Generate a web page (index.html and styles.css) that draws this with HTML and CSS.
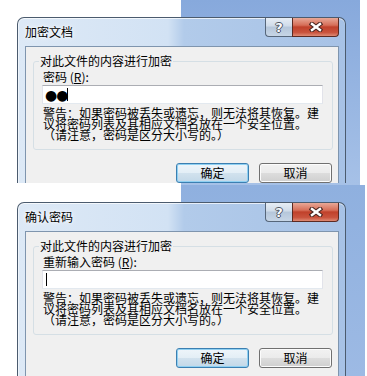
FILE: index.html
```html
<!DOCTYPE html>
<html>
<head>
    <meta charset="utf-8">
    <link rel="stylesheet" href="styles.css">
</head>
<body>
    <div class="shot shot-first">
        <div class="window">
            <div class="titlebar">
                <span class="title">加密文档</span>
                <div class="caption">
                    <span class="cap-btn help">?</span>
                    <span class="cap-btn close">
                        <svg width="14" height="10" viewBox="0 0 14 10">
                            <path d="M3 2 L11 8 M11 2 L3 8" stroke="#4a2620" stroke-width="4.6" stroke-linecap="square"/>
                            <path d="M3 2 L11 8 M11 2 L3 8" stroke="#fff" stroke-width="2.4" stroke-linecap="square"/>
                        </svg>
                    </span>
                </div>
            </div>
            <div class="client">
                <fieldset class="group">
                    <legend>对此文件的内容进行加密</legend>
                    <div class="field-label">密码 (<u>R</u>):</div>
                    <div class="edit"><span class="dots">●●</span><span class="caret"></span></div>
                    <p class="warning">警告：如果密码被丢失或遗忘，则无法将其恢复。建<br>议将密码列表及其相应文档名放在一个安全位置。<br>（请注意，密码是区分大小写的。）</p>
                </fieldset>
                <div class="buttons">
                    <button class="btn default">确定</button>
                    <button class="btn">取消</button>
                </div>
            </div>
        </div>
    </div>
    <div class="shot shot-second">
        <div class="window">
            <div class="titlebar">
                <span class="title">确认密码</span>
                <div class="caption">
                    <span class="cap-btn help">?</span>
                    <span class="cap-btn close">
                        <svg width="14" height="10" viewBox="0 0 14 10">
                            <path d="M3 2 L11 8 M11 2 L3 8" stroke="#4a2620" stroke-width="4.6" stroke-linecap="square"/>
                            <path d="M3 2 L11 8 M11 2 L3 8" stroke="#fff" stroke-width="2.4" stroke-linecap="square"/>
                        </svg>
                    </span>
                </div>
            </div>
            <div class="client">
                <fieldset class="group">
                    <legend>对此文件的内容进行加密</legend>
                    <div class="field-label">重新输入密码 (<u>R</u>):</div>
                    <div class="edit"><span class="caret"></span></div>
                    <p class="warning">警告：如果密码被丢失或遗忘，则无法将其恢复。建<br>议将密码列表及其相应文档名放在一个安全位置。<br>（请注意，密码是区分大小写的。）</p>
                </fieldset>
                <div class="buttons">
                    <button class="btn default">确定</button>
                    <button class="btn">取消</button>
                </div>
            </div>
        </div>
    </div>
</body>
</html>
```

FILE: styles.css
```css
body {
    margin: 0;
    width: 367px;
    height: 376px;
    overflow: hidden;
    font-family: "Noto Sans CJK SC", sans-serif;
    font-size: 12px;
    color: #000;
}
.shot {
    box-sizing: border-box;
    padding: 17px 0 0 17px;
    overflow: hidden;
    background:
        linear-gradient(to right, #fff 181px, transparent 181px, transparent 360px, #fff 360px),
        linear-gradient(#87a9dc, #a6c1e7);
}
.shot-first {
    height: 185px;
}
.shot-second {
    height: 191px;
    background:
        linear-gradient(to right, #fff 181px, transparent 181px, transparent 365px, #fff 365px),
        linear-gradient(#8fb0df, #9dbae4);
}
.window {
    box-sizing: border-box;
    width: 329px;
    border: solid 1px #4b5b6e;
    border-bottom: none;
    border-radius: 7px 7px 0 0;
    padding: 0 6px 0 7px;
    background: linear-gradient(to right, #dde9f6 0, #d2e2f4 150px, #b2cbea 166px, #a7c2e6 100%);
    box-shadow: inset 0 1px 0 rgba(255, 255, 255, 0.7), inset 1px 0 0 rgba(255, 255, 255, 0.5);
}
.shot-first .window {
    height: 166px;
    overflow: hidden;
}
.shot-second .window {
    height: 180px;
}
.titlebar {
    display: flex;
    height: 28px;
}
.title {
    align-self: center;
    line-height: 14px;
    text-shadow: 0 0 6px #fff, 0 0 3px #fff;
}
.caption {
    margin-left: auto;
    display: flex;
    height: 19px;
}
.cap-btn {
    box-sizing: border-box;
    display: flex;
    align-items: center;
    justify-content: center;
    height: 19px;
    border: solid 1px #56667a;
    border-top: none;
}
.help {
    width: 27px;
    border-right: none;
    border-radius: 0 0 0 4px;
    background: linear-gradient(#e6edf5, #cfdbe9 45%, #b5c6da 50%, #c6d5e6);
    font-family: "DejaVu Sans", sans-serif;
    font-weight: bold;
    font-size: 13px;
    color: #fafbfd;
    text-shadow: 1px 0 0 #4c5563, -1px 0 0 #4c5563, 0 1px 0 #4c5563, 0 -1px 0 #4c5563;
}
.close {
    width: 47px;
    border-color: #5c2a22;
    border-radius: 0 0 4px 0;
    background: linear-gradient(#e8a897, #d66e58 40%, #c0412b 50%, #c9533d 80%, #de8a74);
}
.client {
    border: solid 1px #7f95ae;
    background: #f0f0f0;
    height: 100%;
}
.group {
    margin: 8px 5px 0 7px;
    padding: 0 9px 9px 9px;
    border: solid 1px #d5dfe5;
    border-radius: 3px;
    min-width: 0;
}
.group legend {
    margin-left: -4px;
    padding: 0 1px;
    line-height: 12px;
}
.field-label {
    margin-top: 3px;
    line-height: 14px;
}
.edit {
    display: flex;
    align-items: center;
    height: 19px;
    box-sizing: border-box;
    margin: 1px 0 0 -1px;
    padding-left: 3px;
    background: #fff;
    border: solid 1px #e2e3ea;
    border-top-color: #abadb3;
    border-bottom-color: #e3e9ef;
}
.dots {
    margin-left: -1px;
    font-family: "DejaVu Sans", sans-serif;
    font-size: 14px;
    line-height: 14px;
    letter-spacing: -1px;
}
.caret {
    width: 1px;
    height: 13px;
    background: #000;
}
.warning {
    margin: 3px 0 0;
    line-height: 11px;
    white-space: nowrap;
}
.buttons {
    display: flex;
    justify-content: flex-end;
    gap: 10px;
    margin-top: 13px;
    padding-right: 6px;
}
.btn {
    width: 73px;
    height: 20px;
    padding: 0;
    font: inherit;
    line-height: 16px;
    color: #000;
    border: solid 1px #707070;
    border-radius: 3px;
    background: linear-gradient(#f2f2f2, #ebebeb 50%, #dddddd 50%, #cfcfcf);
    box-shadow: inset 0 0 0 1px #fcfcfc;
}
.btn.default {
    border-color: #3c7fb1;
    box-shadow: inset 0 0 0 1px #8fd0f2;
    background: linear-gradient(#eef5fa, #e3eef6 50%, #d2e2ee 50%, #c3d8e8);
}
```
